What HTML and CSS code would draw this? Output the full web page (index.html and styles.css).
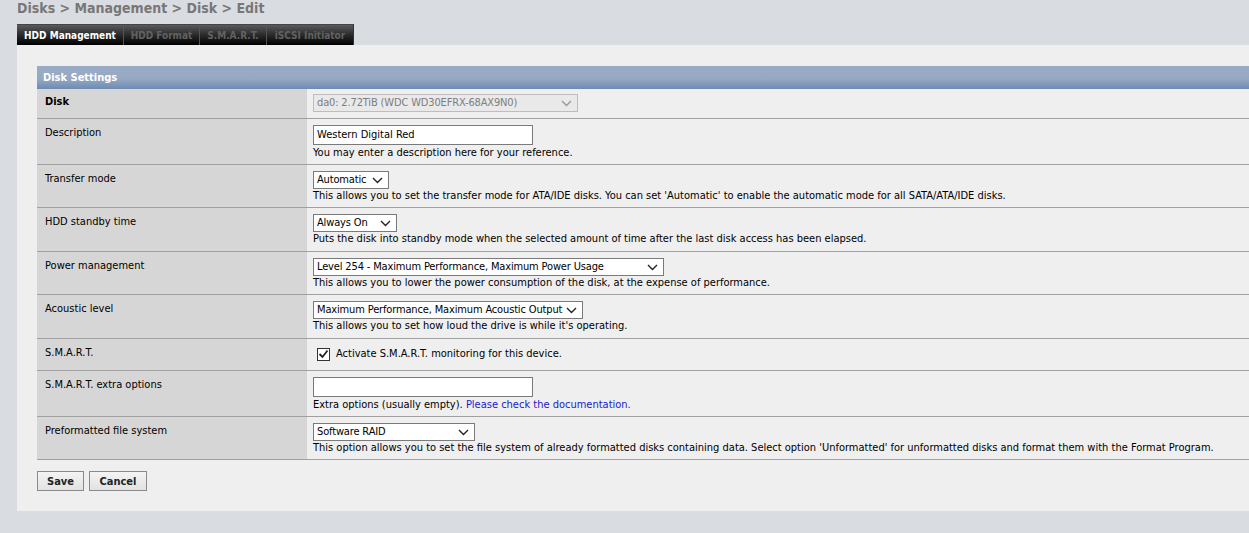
FILE: index.html
```html
<!DOCTYPE html>
<html>
<head>
<meta charset="utf-8">
<link rel="stylesheet" href="styles.css">
</head>
<body>
<div class="crumb">Disks &gt; Management &gt; Disk &gt; Edit</div>
<div class="tabs">
  <span class="tab active">HDD Management</span><span class="tab">HDD Format</span><span class="tab">S.M.A.R.T.</span><span class="tab">iSCSI Initiator</span>
</div>
<div class="content">
  <div class="panel-head">Disk Settings</div>
  <table class="grid">
    <tr>
      <td class="lab lab-disk bold">Disk</td>
      <td class="val val-disk"><span class="sel dis w-disk"><span>da0: 2.72TiB (WDC WD30EFRX-68AX9N0)</span><svg width="11" height="7" viewBox="0 0 11 7"><path d="M1 1l4.5 4.5L10 1" fill="none" stroke="#999" stroke-width="1.4"/></svg></span></td>
    </tr>
    <tr>
      <td class="lab">Description</td>
      <td class="val"><span class="inp">Western Digital Red</span><div class="hint">You may enter a description here for your reference.</div></td>
    </tr>
    <tr>
      <td class="lab">Transfer mode</td>
      <td class="val"><span class="sel w-tm"><span>Automatic</span><svg width="11" height="7" viewBox="0 0 11 7"><path d="M1 1l4.5 4.5L10 1" fill="none" stroke="#222" stroke-width="1.4"/></svg></span><div class="hint">This allows you to set the transfer mode for ATA/IDE disks. You can set 'Automatic' to enable the automatic mode for all SATA/ATA/IDE disks.</div></td>
    </tr>
    <tr class="tall">
      <td class="lab">HDD standby time</td>
      <td class="val"><span class="sel w-sb"><span>Always On</span><svg width="11" height="7" viewBox="0 0 11 7"><path d="M1 1l4.5 4.5L10 1" fill="none" stroke="#222" stroke-width="1.4"/></svg></span><div class="hint">Puts the disk into standby mode when the selected amount of time after the last disk access has been elapsed.</div></td>
    </tr>
    <tr>
      <td class="lab">Power management</td>
      <td class="val"><span class="sel w-pm"><span>Level 254 - Maximum Performance, Maximum Power Usage</span><svg width="11" height="7" viewBox="0 0 11 7"><path d="M1 1l4.5 4.5L10 1" fill="none" stroke="#222" stroke-width="1.4"/></svg></span><div class="hint">This allows you to lower the power consumption of the disk, at the expense of performance.</div></td>
    </tr>
    <tr class="tall">
      <td class="lab">Acoustic level</td>
      <td class="val"><span class="sel w-ac"><span>Maximum Performance, Maximum Acoustic Output</span><svg width="11" height="7" viewBox="0 0 11 7"><path d="M1 1l4.5 4.5L10 1" fill="none" stroke="#222" stroke-width="1.4"/></svg></span><div class="hint">This allows you to set how loud the drive is while it's operating.</div></td>
    </tr>
    <tr>
      <td class="lab">S.M.A.R.T.</td>
      <td class="val"><label class="chk"><span class="box"><svg width="11" height="10" viewBox="0 0 11 10"><path d="M1.5 5l3 3L9.5 1.5" fill="none" stroke="#222" stroke-width="1.8"/></svg></span>Activate S.M.A.R.T. monitoring for this device.</label></td>
    </tr>
    <tr>
      <td class="lab">S.M.A.R.T. extra options</td>
      <td class="val"><span class="inp"></span><div class="hint">Extra options (usually empty). <a href="#" class="link">Please check the documentation.</a></div></td>
    </tr>
    <tr>
      <td class="lab">Preformatted file system</td>
      <td class="val"><span class="sel w-fs"><span>Software RAID</span><svg width="11" height="7" viewBox="0 0 11 7"><path d="M1 1l4.5 4.5L10 1" fill="none" stroke="#222" stroke-width="1.4"/></svg></span><div class="hint">This option allows you to set the file system of already formatted disks containing data. Select option 'Unformatted' for unformatted disks and format them with the Format Program.</div></td>
    </tr>
  </table>
  <div class="buttons">
    <button class="btn">Save</button><button class="btn">Cancel</button>
  </div>
</div>
</body>
</html>
```
FILE: styles.css
```css
html, body {
  margin: 0;
  padding: 0;
}
body {
  background: #d9dce1;
  font-family: "DejaVu Sans Condensed", "DejaVu Sans", sans-serif;
  font-size: 11px;
  color: #000;
  width: 1249px;
  overflow: hidden;
}
.crumb {
  font-family: "DejaVu Sans Condensed", "DejaVu Sans", sans-serif;
  font-weight: bold;
  font-size: 14px;
  color: #777;
  padding-left: 17px;
  height: 18px;
  line-height: 17px;
  margin-bottom: 6px;
}
.tabs {
  display: flex;
  margin-left: 17px;
  height: 21px;
}
.tab {
  display: flex;
  align-items: center;
  justify-content: center;
  height: 21px;
  box-sizing: border-box;
  background: linear-gradient(#5a5a5a, #2a2a2a 50%, #000);
  border-top: 1px solid #444;
  border-right: 1px solid #555;
  color: #626262;
  font-weight: bold;
  font-size: 10px;
}
.tab:nth-child(1) { width: 107px; color: #fff; }
.tab:nth-child(2) { width: 76px; }
.tab:nth-child(3) { width: 67px; }
.tab:nth-child(4) { width: 87px; border-right: 1px solid #333; }
.content {
  background: #efefef;
  margin-left: 17px;
  padding: 21px 0 20px 20px;
}
.panel-head {
  height: 23px;
  line-height: 23px;
  background: linear-gradient(#9aabc5, #97a8c3 55%, #6d8bb3);
  color: #fff;
  font-weight: bold;
  font-size: 11px;
  padding-left: 6px;
}
.grid {
  width: 100%;
  border-collapse: collapse;
}
.grid td {
  vertical-align: top;
  border-bottom: 1px solid #a0a0a0;
  line-height: 14px;
}
.lab {
  width: 254px;
  background: #d6d6d6;
  padding: 7px 8px 3px 8px;
}
.lab-disk {
  padding-top: 6px;
}
.bold { font-weight: bold; }
.val {
  padding: 6px 6px 4px 6px;
}
.tall .val {
  padding-bottom: 5px;
}
.val-disk {
  padding: 5px 6px 6px 6px;
}
.hint {
  margin: 0;
}
.sel {
  display: inline-flex;
  align-items: center;
  justify-content: space-between;
  gap: 2px;
  box-sizing: border-box;
  height: 18px;
  border: 1px solid #7a7a7a;
  background: #fff;
  padding: 0 5px 0 3px;
  vertical-align: top;
  white-space: nowrap;
  overflow: hidden;
  letter-spacing: -0.15px;
}
.sel svg { flex: none; }
.sel.dis {
  background: #e9e9e9;
  border-color: #bdbdbd;
  color: #7d7d7d;
}
.w-disk { width: 265px; }
.w-tm { width: 76px; }
.w-sb { width: 84px; }
.w-pm { width: 351px; }
.w-ac { width: 270px; }
.w-fs { width: 162px; }
.inp {
  display: block;
  box-sizing: border-box;
  width: 220px;
  height: 20px;
  margin-bottom: 1px;
  border: 1px solid #7a7a7a;
  background: #fff;
  padding: 2px 3px;
  line-height: 14px;
}
.chk {
  display: flex;
  align-items: center;
  height: 14px;
  margin: 2px 0 5px 0;
}
.box {
  display: inline-flex;
  align-items: center;
  justify-content: center;
  box-sizing: border-box;
  width: 13px;
  height: 13px;
  border: 1px solid #333;
  background: #fff;
  margin: 0 6px 0 4px;
}
.link {
  color: #1a1acc;
  text-decoration: none;
}
.buttons {
  display: flex;
  gap: 5px;
  margin-top: 11px;
}
.btn {
  font-family: "DejaVu Sans Condensed", "DejaVu Sans", sans-serif;
  font-weight: bold;
  font-size: 11px;
  height: 20px;
  padding: 0 8px;
  border: 1px solid #8a8a8a;
  background: linear-gradient(#f4f4f4, #e2e2e2);
  color: #222;
  border-radius: 0;
}
.btn:first-child { width: 47px; }
.btn:last-child { width: 58px; }
```
